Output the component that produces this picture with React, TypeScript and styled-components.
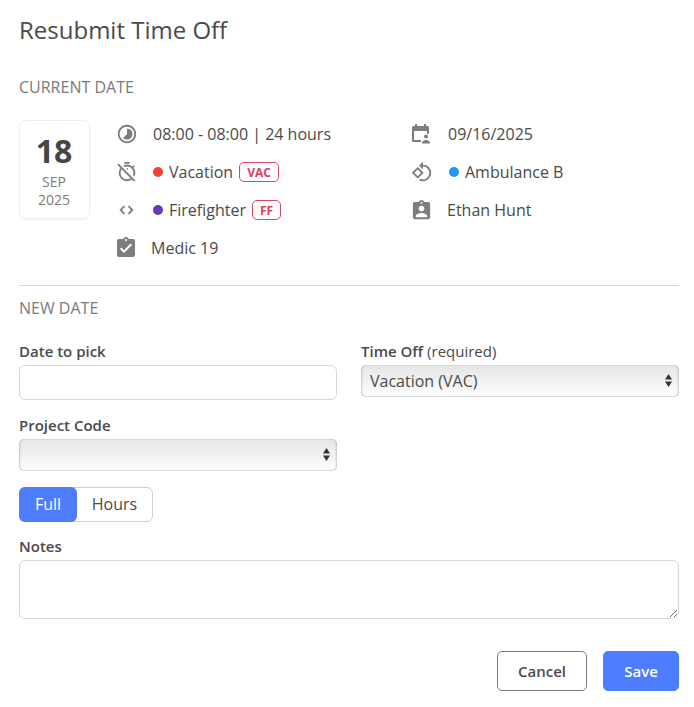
import styled, { createGlobalStyle } from "styled-components";
import {
  MdAssignmentInd,
  MdAssignmentTurnedIn,
  MdOutlineTimerOff,
  MdRotate90DegreesCcw,
  MdTimelapse,
} from "react-icons/md";

const GlobalStyle = createGlobalStyle`
  html, body {
    margin: 0;
    padding: 0;
    background: #fff;
  }
  * {
    box-sizing: border-box;
  }
  body {
    font-family: "Open Sans", "Liberation Sans", sans-serif;
    color: #4a4a4a;
  }
`;

const Page = styled.div`
  width: 694px;
  height: 707px;
  padding: 0 15px 0 19px;
  overflow: hidden;
`;
const Title = styled.h1`
  margin: 0;
  padding-top: 13px;
  font-size: 24px;
  line-height: 33px;
  font-weight: 400;
  color: #4a4a4a;
`;
const SectionLabel = styled.h2`
  margin: 0;
  font-size: 16px;
  line-height: 20px;
  font-weight: 400;
  color: #7b7b7b;
  text-transform: uppercase;
`;
const CurrentLabel = styled(SectionLabel)`
  margin-top: 31px;
`;
const Summary = styled.div`
  display: flex;
  margin-top: 23px;
`;
const DateCard = styled.div`
  width: 71px;
  height: 99px;
  flex: none;
  display: flex;
  flex-direction: column;
  align-items: center;
  padding: 8px 1px 0 0;
  border: 1px solid #eeeeee;
  border-radius: 6px;
  box-shadow: 0 1px 2px rgba(0, 0, 0, 0.05);
`;
const DateDay = styled.div`
  font-size: 32px;
  line-height: 43px;
  margin-bottom: 1px;
  font-weight: 700;
  color: #454545;
`;
const DateMonth = styled.div`
  font-size: 14px;
  line-height: 18px;
  color: #7b7b7b;
`;
const DetailGrid = styled.div`
  display: grid;
  grid-template-columns: 294px 1fr;
  grid-auto-rows: 38px;
  margin-left: 26px;
  margin-top: -5px;
`;
const DetailRow = styled.div`
  display: flex;
  align-items: center;
  font-size: 16px;
  color: #4a4a4a;
  white-space: nowrap;
`;
const IconSlot = styled.span<{ $w?: number; $shift?: number }>`
  width: ${(p) => p.$w ?? 37}px;
  flex: none;
  display: flex;
  align-items: center;
  color: #7d7d7d;
  svg {
    display: block;
    flex: none;
    margin-left: ${(p) => p.$shift ?? 0}px;
  }
`;
const Dot = styled.span<{ $color: string }>`
  width: 10px;
  height: 10px;
  border-radius: 50%;
  margin-right: 6px;
  background: ${(p) => p.$color};
`;
const CodeTag = styled.span`
  margin-left: 6px;
  padding: 0 7px;
  height: 20px;
  display: inline-flex;
  align-items: center;
  border: 1px solid #d9435f;
  border-radius: 5px;
  font-size: 12px;
  font-weight: 700;
  color: #d9435f;
`;
const Divider = styled.hr`
  margin: 18px 0 0;
  border: 0;
  border-top: 1px solid #d8d8d8;
`;
const NewLabel = styled(SectionLabel)`
  margin-top: 12px;
`;
const FormGrid = styled.div`
  display: grid;
  grid-template-columns: 318px 318px;
  column-gap: 24px;
  margin-top: 23px;
`;
const Field = styled.div`
  margin-bottom: 15px;
`;
const Label = styled.label`
  display: block;
  margin-bottom: 4px;
  font-size: 15px;
  line-height: 20px;
  font-weight: 600;
  color: #4a4a4a;
`;
const Hint = styled.span`
  font-weight: 400;
`;
const TextInput = styled.input`
  display: block;
  width: 100%;
  height: 35px;
  border: 1px solid #d8d8d8;
  border-radius: 6px;
  background: #fff;
  outline: 0;
`;
const SelectWrap = styled.div`
  position: relative;
  height: 32px;
  margin-top: 1px;
`;
const ProjectSelectWrap = styled(SelectWrap)`
  margin-top: 0;
`;
const Select = styled.select`
  display: block;
  width: 100%;
  height: 32px;
  appearance: none;
  padding: 0 24px 0 9px;
  border: 0;
  border-radius: 5px;
  font-family: inherit;
  font-size: 16px;
  color: #4a4a4a;
  background: linear-gradient(180deg, #e6e6e6 0%, #f1f1f1 50%, #ffffff 100%);
  box-shadow: inset 0 1px 1px rgba(0, 0, 0, 0.05), inset 2px 0 2px -1px rgba(0, 0, 0, 0.18),
    inset -2px 0 2px -1px rgba(0, 0, 0, 0.18), inset 0 -1px 0 rgba(0, 0, 0, 0.12);
`;
const Arrows = styled.svg`
  position: absolute;
  right: 7px;
  top: 9px;
  pointer-events: none;
`;
const ToggleGroup = styled.div`
  display: flex;
  width: 134px;
  height: 35px;
  margin-top: 1px;
  border: 1px solid #d0d0d0;
  border-radius: 6px;
`;
const ToggleButton = styled.button<{ $active?: boolean }>`
  height: 35px;
  margin: -1px 0;
  padding: 0 0 2px;
  border: 0;
  flex: ${(p) => (p.$active ? "0 0 58px" : "1")};
  margin-left: ${(p) => (p.$active ? "-1px" : "0")};
  border-radius: ${(p) => (p.$active ? "6px" : "0 6px 6px 0")};
  background: ${(p) => (p.$active ? "#4d7cfe" : "transparent")};
  color: ${(p) => (p.$active ? "#fff" : "#4a4a4a")};
  font-family: inherit;
  font-size: 16px;
`;
const NotesField = styled.div`
  margin-top: 14px;
`;
const NotesInput = styled.textarea`
  display: block;
  width: 100%;
  height: 59px;
  border: 1px solid #d8d8d8;
  border-radius: 6px;
  outline: 0;
`;
const Footer = styled.div`
  display: flex;
  justify-content: flex-end;
  gap: 16px;
  margin-top: 32px;
`;
const ActionButton = styled.button<{ $primary?: boolean }>`
  width: ${(p) => (p.$primary ? 76 : 90)}px;
  height: 40px;
  padding: 0;
  border: 1px solid ${(p) => (p.$primary ? "#4d7cfe" : "#7b7b7b")};
  border-radius: 5px;
  background: ${(p) => (p.$primary ? "#4d7cfe" : "#fff")};
  color: ${(p) => (p.$primary ? "#fff" : "#4a4a4a")};
  font-family: inherit;
  font-size: 15px;
  font-weight: 600;
`;

const CalendarPersonIcon = () => (
  <svg width="22" height="22" viewBox="0 0 22 22" fill="currentColor">
    <path d="M5 1h2v2h7V1h2v2h1.500A1.500 1.500 0 0 1 19 4.500V11h-2V8H4v9h7v2H3.500A1.500 1.500 0 0 1 2 17.500v-13A1.500 1.500 0 0 1 3.500 3H5z" />
    <circle cx="16" cy="13.500" r="2" />
    <path d="M12 20c0-2 2-3 4-3s4 1 4 3v.500h-8z" />
  </svg>
);

const CodeIcon = () => (
  <svg width="15" height="10" viewBox="0 0 15 10" fill="none" stroke="currentColor" strokeWidth="1.800">
    <path d="M5.500 1.200L1.700 5l3.800 3.800M9.500 1.200L13.300 5 9.500 8.800" />
  </svg>
);

const SelectArrows = () => (
  <Arrows width="7" height="13" viewBox="0 0 7 13" fill="#333">
    <path d="M3.500 0L7 5.500H0zM3.500 13L0 7.500h7z" />
  </Arrows>
);

export default function App() {
  return (
    <Page>
      <GlobalStyle />
      <Title>Resubmit Time Off</Title>
      <CurrentLabel>Current Date</CurrentLabel>
      <Summary>
        <DateCard>
          <DateDay>18</DateDay>
          <DateMonth>SEP</DateMonth>
          <DateMonth>2025</DateMonth>
        </DateCard>
        <DetailGrid>
          <DetailRow>
            <IconSlot><MdTimelapse size={22} /></IconSlot>
            08:00 - 08:00 | 24 hours
          </DetailRow>
          <DetailRow>
            <IconSlot $w={38}><CalendarPersonIcon /></IconSlot>
            09/16/2025
          </DetailRow>
          <DetailRow>
            <IconSlot><MdOutlineTimerOff size={22} /></IconSlot>
            <Dot $color="#f44336" />
            Vacation
            <CodeTag>VAC</CodeTag>
          </DetailRow>
          <DetailRow>
            <IconSlot $w={39} $shift={1}><MdRotate90DegreesCcw size={22} /></IconSlot>
            <Dot $color="#2196f3" />
            Ambulance B
          </DetailRow>
          <DetailRow>
            <IconSlot $shift={3}><CodeIcon /></IconSlot>
            <Dot $color="#673ab7" />
            Firefighter
            <CodeTag>FF</CodeTag>
          </DetailRow>
          <DetailRow>
            <IconSlot><MdAssignmentInd size={23} /></IconSlot>
            Ethan Hunt
          </DetailRow>
          <DetailRow>
            <IconSlot $w={35} $shift={-2}><MdAssignmentTurnedIn size={24} /></IconSlot>
            Medic 19
          </DetailRow>
        </DetailGrid>
      </Summary>
      <Divider />
      <NewLabel>New Date</NewLabel>
      <FormGrid>
        <Field>
          <Label>Date to pick</Label>
          <TextInput />
        </Field>
        <Field>
          <Label>
            Time Off <Hint>(required)</Hint>
          </Label>
          <SelectWrap>
            <Select defaultValue="vac">
              <option value="vac">Vacation (VAC)</option>
            </Select>
            <SelectArrows />
          </SelectWrap>
        </Field>
        <Field>
          <Label>Project Code</Label>
          <ProjectSelectWrap>
            <Select />
            <SelectArrows />
          </ProjectSelectWrap>
        </Field>
      </FormGrid>
      <ToggleGroup>
        <ToggleButton $active>Full</ToggleButton>
        <ToggleButton>Hours</ToggleButton>
      </ToggleGroup>
      <NotesField>
        <Label>Notes</Label>
        <NotesInput />
      </NotesField>
      <Footer>
        <ActionButton>Cancel</ActionButton>
        <ActionButton $primary>Save</ActionButton>
      </Footer>
    </Page>
  );
}
